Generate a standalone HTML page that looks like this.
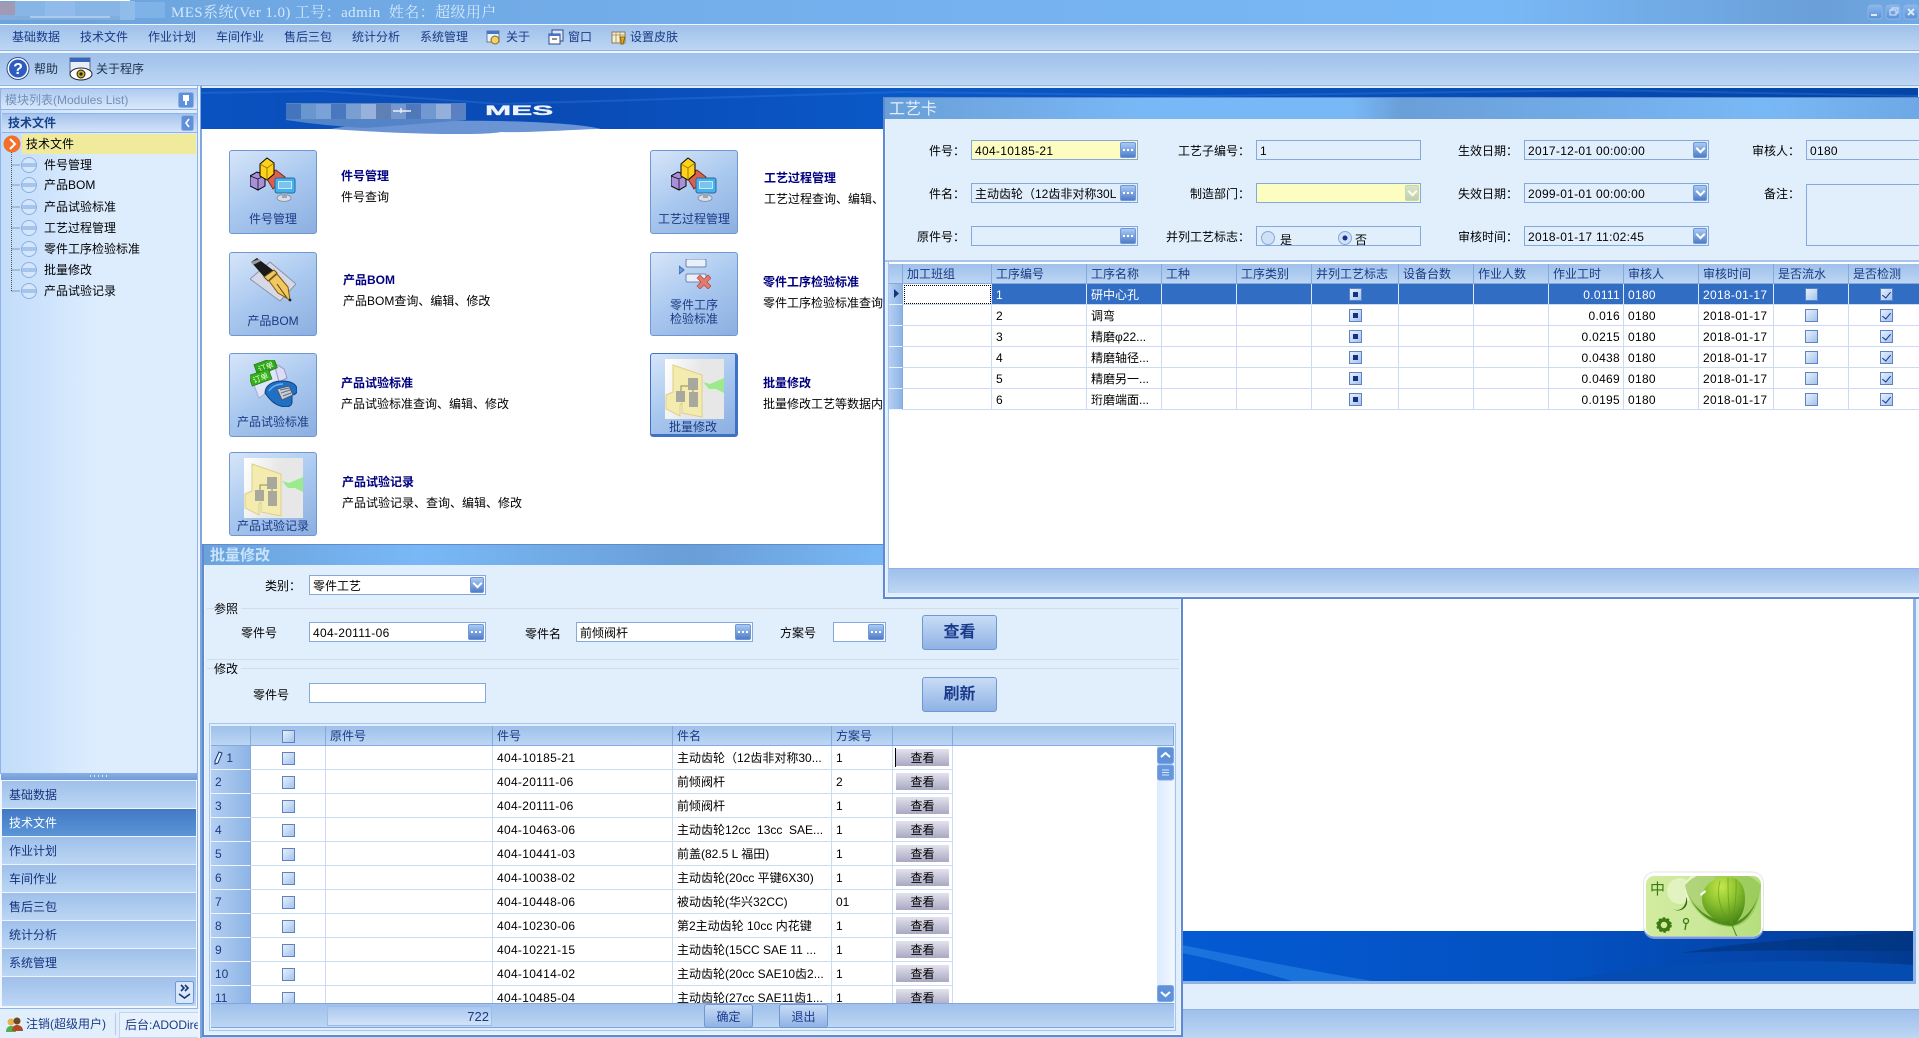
<!DOCTYPE html>
<html lang="zh"><head><meta charset="utf-8"><title>MES</title>
<style>
html,body{margin:0;padding:0;width:1919px;height:1038px;overflow:hidden;background:#e1effd}
body{position:relative;font:12px/16px "Liberation Sans","WenQuanYi Zen Hei","Noto Sans CJK SC",sans-serif;color:#000}
div,span,svg,table{box-sizing:border-box}
.a,.t{position:absolute}
.t{white-space:pre;height:18px;line-height:18px}
.n{color:#1a3a84}
.m{letter-spacing:.3px}
.bar{background:linear-gradient(#9fc0eb,#bcd6f3)}
.tb{position:absolute;height:21px;color:#c9e3fb;font-weight:bold;font-size:15px;line-height:23px;padding-left:6px}
.in{position:absolute;height:20px;border:1px solid #86a9dd;background:#fff;padding-left:3px;line-height:20px;white-space:pre;overflow:hidden}
.c{background:#e1effd}
.y{background:#fdfdc2}
.e,.d{position:absolute;top:1px;right:1px;height:16px;border:1px solid #6f96d6;border-radius:2px;background:linear-gradient(#a9cbf3,#4f7dc8)}
.e{width:16px}
.e:after{content:"";position:absolute;left:6px;top:6px;width:2px;height:2px;background:#fff;box-shadow:-4px 0 #fff,4px 0 #fff}
.d{width:14px}
.d:after{content:"";position:absolute;left:3px;top:2px;width:5px;height:5px;border:solid #fff;border-width:0 2px 2px 0;transform:rotate(45deg)}
.g{opacity:.65;background:linear-gradient(#c5d8cf,#9fb9ae);border-color:#a9c0b0}
.ib{position:absolute;width:88px;height:84px;border:1px solid #6f97d2;border-radius:3px;background:linear-gradient(150deg,#d6e5f9,#a9c8ef 50%,#8cafe1);color:#1a3a84;text-align:center}
.ib span{position:absolute;left:0;right:0}
.h{color:#000080;font-weight:bold}
table{position:absolute;border-collapse:separate;border-spacing:0;table-layout:fixed}
td{padding:1px 0 0 4px;border-right:1px solid #cbdbf5;border-bottom:1px solid #cbdbf5;white-space:pre;overflow:hidden;vertical-align:middle;background:#fff}
tr.hd td{background:linear-gradient(#9fc0eb,#bcd6f3);color:#1a3a84;border-right:1px solid #86a9dd;border-bottom:1px solid #86a9dd}
td.rh{background:linear-gradient(90deg,#b4cff2,#8db4e6);color:#1a3a84;border-right:1px solid #86a9dd;border-bottom:1px solid #eef5fe}
tr.s td{background:#326dc4;color:#fff;border-bottom-color:#cbdbf5;border-right-color:#dce8fa}
td.ct{padding:0;text-align:center}
td.r{text-align:right;padding:1px 3px 0 0}
.ck{display:inline-block;width:13px;height:13px;border:1px solid #5f82c4;background:linear-gradient(135deg,#e6f0fc,#a4c3ec);vertical-align:middle;position:relative}
.ck.i:after{content:"";position:absolute;left:3px;top:3px;width:5px;height:5px;background:#16308a}
.ck.v:after{content:"";position:absolute;left:3px;top:1px;width:4px;height:7px;border:solid #16308a;border-width:0 1.5px 1.5px 0;transform:rotate(40deg)}
.sb{display:block;margin:0 0 0 3px;width:53px;height:17px;background:linear-gradient(#e2e2ee,#a9a8c2);text-align:center;line-height:18px}
.bb{position:absolute;border:1px solid #6f97d2;border-radius:3px;background:linear-gradient(#c8dcf6,#8fb2e4);color:#1a3a8c;text-align:center}
.nv{position:absolute;left:2px;width:194px;height:27px;background:linear-gradient(#9fc0eb,#bcd6f3);color:#15337e;line-height:29px;padding-left:7px}
.ln{position:absolute;height:1px;background:#d5dce6}
</style></head><body>

<svg width="0" height="0" style="position:absolute"><defs>
<symbol id="ic1" viewBox="0 0 46 45">
<path d="M14 17l12-4 9 7-12 12z" fill="#d9604a" stroke="#7a2a20"/>
<path d="M0 19l7-4 8 3v11l-7 4-8-4z" fill="#a98fd8" stroke="#000"/><path d="M8 22v11M0 19l8 3 7-4" fill="none" stroke="#000" stroke-width=".7"/>
<path d="M10 7l7-6 7 5v11l-7 6-7-4z" fill="#ffd21a" stroke="#000"/><path d="M17 11v12M10 7l7 4 7-5" fill="none" stroke="#a87800"/>
<rect x="25" y="21" width="20" height="15" rx="2" fill="#47b1ee" stroke="#266a9c"/><rect x="28" y="24" width="14" height="8" fill="#bfeaff"/><path d="M29 26h12M29 28h12M29 30h12" stroke="#3b9ad6"/>
<ellipse cx="34" cy="41" rx="7" ry="3.5" fill="#d8dde6" stroke="#8a92a6"/><path d="M32 36h5v5h-5z" fill="#9aa6ba"/>
</symbol>
<symbol id="ic2" viewBox="0 0 46 44">
<path d="M0 21L20 4l26 22-16 17z" fill="#d6d8e6" stroke="#8c90a8"/>
<path d="M1 4L7 0l17 13-8 8z" fill="#1a1a1a"/><path d="M1 4l8-3 2 2-8 4z" fill="#999"/>
<path d="M14 19l10-7 3 3-9 8z" fill="#e8c868" stroke="#6e5010"/>
<path d="M19 23l8-7 11 13 2 13-12-7z" fill="#f2c860" stroke="#7a5a12"/><path d="M27 26l10 14" stroke="#5a4010"/><circle cx="40" cy="42" r="1.4" fill="#222"/>
</symbol>
<symbol id="ic3" viewBox="0 0 47 47">
<path d="M2 20l28-14 7 12-28 20z" fill="#dfe5f6" stroke="#a2aecc"/>
<path d="M24 3l10 6 3 9-8 4z" fill="#dcdcf6" stroke="#9898c8"/>
<g transform="rotate(-20 15 6)"><rect x="5" y="1" width="21" height="11" fill="#2fa81a" stroke="#1a6a10" stroke-width=".6"/><text x="15.500" y="10" text-anchor="middle" font-size="8" fill="#e8ffd0" font-family="WenQuanYi Zen Hei,Noto Sans CJK SC,sans-serif">订单</text></g>
<g transform="rotate(-20 10 18)"><rect x="0" y="12" width="21" height="11" fill="#35b01e" stroke="#1a6a10" stroke-width=".6"/><text x="10.500" y="21" text-anchor="middle" font-size="8" fill="#e8ffd0" font-family="WenQuanYi Zen Hei,Noto Sans CJK SC,sans-serif">订单</text></g>
<path d="M15 33c0-8 8-12 17-12s15 3 15 9c0 4-3 5-5 5v7c0 4-4 5-7 5-8-1-13-4-20-14z" fill="#1f6fc4" stroke="#0d3f80"/>
<path d="M19 31c3-5 9-7 14-7" stroke="#6ab4f0" stroke-width="1.500" fill="none"/>
<path d="M27 29l12-3 4 9-11 5z" fill="#c7ccd4" stroke="#4a5a74"/><path d="M30 30l9-2M31 33l9-3M33 36l8-3" stroke="#60708c"/>
</symbol>
<symbol id="ic4" viewBox="0 0 59 60">
<defs><linearGradient id="bg4" x1="0" y1="0" x2="1" y2=".3"><stop offset="0" stop-color="#ffffff"/><stop offset=".6" stop-color="#e7e7e7"/></linearGradient></defs>
<rect width="59" height="60" fill="url(#bg4)"/>
<path d="M8 6L37 16V58L17 54V44L15 46V57L1 50V36L8 33z" fill="#f3ecae" stroke="#dcd08a"/>
<path d="M23 19h10v12H23zM11 32h9v11h-9zM24 33h9v15h-9z" fill="#a8a89c"/><path d="M28 31v2M16 32v-5h7" stroke="#8c8c60" fill="none"/>
<path d="M38 23l7 2 14-6v15l-8-4-7 0z" fill="#9bea8c"/>
</symbol>
<symbol id="ic5" viewBox="0 0 32 30">
<path d="M0 7l5 4-5 4z" fill="#6a9ee0" stroke="#3a68ac"/>
<rect x="7" y="0" width="20" height="8" rx="1.5" fill="#e8f0fb" stroke="#6f86ac"/>
<rect x="7" y="15" width="20" height="8" rx="1.5" fill="#e8f0fb" stroke="#6f86ac"/>
<path d="M21 16l4 4 4-4 3 3-4 4 4 4-3 3-4-4-4 4-3-3 4-4-4-4z" fill="#e27b6e" stroke="#b04a42" stroke-width=".7"/>
</symbol>
</defs></svg>

<!-- title bar -->
<div class="a" style="left:0;top:0;width:1919px;height:24px;background:linear-gradient(90deg,#6ca3dc 0,#74afec 40%,#79b8f6 78%,#6a9fd8 95%,#70aae4 100%)"></div>
<div class="a" style="left:0;top:0;width:130px;height:1px;background:#fff"></div>
<div class="a" style="left:0;top:2px;width:15px;height:13px;background:#a09ab4"></div>
<div class="a" style="left:15px;top:1px;width:115px;height:15px;background:#87b5e6"></div>
<div class="a" style="left:0;top:15px;width:15px;height:5px;background:#85aede"></div>
<div class="a" style="left:15px;top:16px;width:115px;height:4px;background:#82aede"></div>
<div class="a" style="left:45px;top:1px;width:30px;height:15px;background:#90bbea"></div>
<div class="a" style="left:120px;top:1px;width:15px;height:19px;background:#90bcea"></div>
<div class="a" style="left:135px;top:2px;width:30px;height:16px;background:#7fb2e6"></div>
<div class="a" style="left:30px;top:16px;width:80px;height:2px;background:#c7def8;opacity:.6"></div>
<span class="t" style="left:171px;top:4px;height:18px;font:15px/18px 'Liberation Serif','Noto Serif CJK SC',serif;color:#d3e8fb;letter-spacing:.4px">MES系统(Ver 1.0) 工号：admin  姓名：超级用户</span>
<svg class="a" style="left:1867px;top:4px" width="52" height="16">
<defs><linearGradient id="wb" x1="0" x2="0" y1="0" y2="1"><stop offset="0" stop-color="#8db8ec"/><stop offset="1" stop-color="#5a8ed6"/></linearGradient></defs>
<g stroke="#8db4e8"><rect x="1" y="1" width="14" height="14" rx="3" fill="url(#wb)"/><rect x="19" y="1" width="14" height="14" rx="3" fill="url(#wb)"/><rect x="37" y="1" width="14" height="14" rx="3" fill="url(#wb)"/></g>
<path d="M4 11h6" stroke="#dbeafc" stroke-width="2"/><path d="M23 6h6v5h-6zM25 6V4h6v5h-2" stroke="#dbeafc" fill="none"/><path d="M41 5l6 6M47 5l-6 6" stroke="#dbeafc" stroke-width="2"/>
</svg>
<div class="a" style="left:0;top:24px;width:1919px;height:1px;background:#f2f8ff"></div>

<!-- menu -->
<div class="a bar" style="left:0;top:25px;width:1919px;height:25px"></div>
<div class="a" style="left:0;top:50px;width:1919px;height:1px;background:#8fb3e6"></div>
<div class="a" style="left:0;top:51px;width:1919px;height:2px;background:#eef5fe"></div>
<span class="t n" style="left:12px;top:28px">基础数据</span>
<span class="t n" style="left:80px;top:28px">技术文件</span>
<span class="t n" style="left:148px;top:28px">作业计划</span>
<span class="t n" style="left:216px;top:28px">车间作业</span>
<span class="t n" style="left:284px;top:28px">售后三包</span>
<span class="t n" style="left:352px;top:28px">统计分析</span>
<span class="t n" style="left:420px;top:28px">系统管理</span>
<svg class="a" style="left:486px;top:29px" width="16" height="16"><rect x="1" y="2" width="12" height="11" fill="#eef3fb" stroke="#6a7aa0"/><rect x="1" y="2" width="12" height="3" fill="#3f78c8"/><circle cx="9" cy="11" r="4" fill="#f0d070" stroke="#8a6a10"/></svg>
<span class="t n" style="left:506px;top:28px">关于</span>
<svg class="a" style="left:548px;top:29px" width="16" height="16"><rect x="4" y="1" width="11" height="11" fill="#dfe8f6" stroke="#2c4a90"/><rect x="1" y="5" width="11" height="10" fill="#fff" stroke="#2c4a90"/><rect x="1" y="5" width="11" height="2" fill="#3f78c8"/><path d="M4 10h5" stroke="#222"/></svg>
<span class="t n" style="left:568px;top:28px">窗口</span>
<svg class="a" style="left:611px;top:29px" width="16" height="16"><rect x="1" y="3" width="13" height="11" fill="#f6f0d8" stroke="#8a7a50"/><path d="M1 6h13M5 3v11M9 3v11" stroke="#b09a60"/><path d="M9 8h5l-1 3-1 4h-2v-4z" fill="#e8b020" stroke="#8a6010"/></svg>
<span class="t n" style="left:630px;top:28px">设置皮肤</span>

<!-- toolbar -->
<div class="a bar" style="left:0;top:53px;width:1919px;height:32px"></div>
<div class="a" style="left:0;top:85px;width:1919px;height:1px;background:#8fb3e6"></div>
<svg class="a" style="left:6px;top:56px" width="24" height="25"><circle cx="12" cy="12.5" r="11" fill="#fff" stroke="#33508c"/><circle cx="12" cy="12.5" r="9" fill="#2d5dc0"/><text x="12" y="18" text-anchor="middle" font-size="16" font-weight="bold" fill="#fff" font-family="Liberation Sans">?</text></svg>
<span class="t n" style="left:34px;top:60px;color:#22344f">帮助</span>
<svg class="a" style="left:69px;top:57px" width="24" height="24"><rect x="1" y="1" width="20" height="15" fill="#e8eef8" stroke="#5a6a90"/><rect x="1" y="1" width="20" height="4" fill="#3566b8"/><ellipse cx="12" cy="17" rx="11" ry="6" fill="#fff" stroke="#222"/><circle cx="12" cy="17" r="4" fill="#c8b020" stroke="#222"/><circle cx="12" cy="17" r="1.6" fill="#222"/></svg>
<span class="t n" style="left:96px;top:60px;color:#22344f">关于程序</span>

<!-- sidebar -->
<div class="a" style="left:0;top:86px;width:198px;height:923px;background:#f2f8ff"></div>
<div class="a" style="left:0;top:88px;width:198px;height:686px;background:linear-gradient(90deg,#c2dcfa,#ddedfe 50%);border:1px solid #8fb3e6"></div>
<div class="a" style="left:1px;top:89px;width:196px;height:21px;background:linear-gradient(#b0cbef,#d9e8fa);border-bottom:1px solid #8fb3e6"></div>
<span class="t" style="left:5px;top:91px;color:#7090bb">模块列表(Modules List)</span>
<svg class="a" style="left:178px;top:92px" width="16" height="16"><rect x=".5" y=".5" width="15" height="15" rx="2" fill="#5f90da" stroke="#8fb3e6"/><path d="M5 3h6v6H9v4H7V9H5z" fill="#fff"/></svg>
<div class="a" style="left:2px;top:113px;width:195px;height:20px;background:linear-gradient(#a6c4ec,#d3e3f8);border-top:1px solid #8fb3e6;border-bottom:1px solid #8fb3e6"></div>
<span class="t" style="left:8px;top:114px;color:#15428b;font-weight:bold">技术文件</span>
<svg class="a" style="left:181px;top:115px" width="13" height="16"><rect x=".5" y=".5" width="12" height="15" rx="2" fill="#5f90da" stroke="#8fb3e6"/><path d="M8 4L5 8l3 4" stroke="#fff" stroke-width="1.6" fill="none"/></svg>
<div class="a" style="left:22px;top:134px;width:174px;height:20px;background:#f0eb9c"></div>
<span class="t" style="left:26px;top:135px">技术文件</span>
<svg class="a" style="left:3px;top:135px" width="18" height="18"><circle cx="9" cy="9" r="8.5" fill="#f4702a"/><path d="M7 4l5 5-5 5" stroke="#fff" stroke-width="2" fill="none"/></svg>
<svg class="a" style="left:8px;top:152px" width="30" height="150">
<path d="M3.5 0V139M3.5 13H12M3.5 33H12M3.5 55H12M3.5 76H12M3.5 97H12M3.5 118H12M3.5 139H12" stroke="#555" stroke-dasharray="1 1" fill="none"/>
<g fill="#d5e6fb" stroke="#8ab0e4"><circle cx="21" cy="13" r="7.5"/><circle cx="21" cy="33" r="7.5"/><circle cx="21" cy="55" r="7.5"/><circle cx="21" cy="76" r="7.5"/><circle cx="21" cy="97" r="7.5"/><circle cx="21" cy="118" r="7.5"/><circle cx="21" cy="139" r="7.5"/></g>
<g fill="#a5c4ee"><rect x="14" y="11" width="14" height="4"/><rect x="14" y="31" width="14" height="4"/><rect x="14" y="53" width="14" height="4"/><rect x="14" y="74" width="14" height="4"/><rect x="14" y="95" width="14" height="4"/><rect x="14" y="116" width="14" height="4"/><rect x="14" y="137" width="14" height="4"/></g>
</svg>
<span class="t" style="left:44px;top:156px">件号管理</span>
<span class="t" style="left:44px;top:176px">产品BOM</span>
<span class="t" style="left:44px;top:198px">产品试验标准</span>
<span class="t" style="left:44px;top:219px">工艺过程管理</span>
<span class="t" style="left:44px;top:240px">零件工序检验标准</span>
<span class="t" style="left:44px;top:261px">批量修改</span>
<span class="t" style="left:44px;top:282px">产品试验记录</span>

<div class="a" style="left:1px;top:773px;width:196px;height:7px;background:linear-gradient(#8ab0e4,#6f9ad8)"></div>
<div class="a" style="left:90px;top:775px;width:18px;height:2px;background:repeating-linear-gradient(90deg,#dbe8fa 0 1px,transparent 1px 4px)"></div>
<div class="a" style="left:1px;top:780px;width:197px;height:227px;background:#eef5fe;border-right:1px solid #8fb3e6"></div>
<div class="nv" style="top:781px">基础数据</div>
<div class="nv" style="top:809px;background:linear-gradient(#4278c4,#5a96d8);color:#fff">技术文件</div>
<div class="nv" style="top:837px">作业计划</div>
<div class="nv" style="top:865px">车间作业</div>
<div class="nv" style="top:893px">售后三包</div>
<div class="nv" style="top:921px">统计分析</div>
<div class="nv" style="top:949px">系统管理</div>
<div class="a bar" style="left:2px;top:977px;width:194px;height:29px"></div>
<svg class="a" style="left:175px;top:981px" width="19" height="23"><rect x=".5" y=".5" width="18" height="22" rx="2" fill="#d9e7fa" stroke="#6f97d2"/><path d="M6 4l3 3-3 3M10 4l3 3-3 3M4 13l5.500 4 5.500-4" stroke="#15337e" stroke-width="1.600" fill="none"/></svg>

<!-- status left -->
<div class="a" style="left:0;top:1009px;width:203px;height:29px;background:#e1effd"></div>
<div class="a" style="left:0;top:1008px;width:198px;height:1px;background:#8fb3e6"></div>
<svg class="a" style="left:6px;top:1016px" width="17" height="17"><circle cx="5" cy="6" r="3.500" fill="#e8b050"/><path d="M0 16c0-5 3-6 5-6s5 1 5 6z" fill="#52b052"/><circle cx="11" cy="5" r="3.500" fill="#6a4a20"/><path d="M6 15c0-5 3-6 5-6s6 1 6 6z" fill="#b04a20"/></svg>
<span class="t n" style="left:26px;top:1015px">注销(超级用户)</span>
<div class="a" style="left:115px;top:1013px;width:1px;height:22px;background:#b9c9e0"></div>
<div class="a" style="left:119px;top:1012px;width:84px;height:26px;background:#e8f2fe;border:1px solid #c2d4ee"></div>
<span class="t n" style="left:125px;top:1016px">后台:ADODire</span>

<!-- separators -->
<div class="a" style="left:197px;top:86px;width:1px;height:923px;background:#8fb3e6"></div>
<div class="a" style="left:198px;top:86px;width:2px;height:952px;background:#eef5fe"></div>
<div class="a" style="left:200px;top:86px;width:2px;height:952px;background:#7fa6e0"></div>

<!-- main content -->
<div class="a" style="left:202px;top:129px;width:682px;height:420px;background:#fff"></div>
<svg class="a" style="left:201px;top:88px" width="1718" height="46" viewBox="0 0 1718 46">
<defs><linearGradient id="tb" x1="0" x2="1" y1="0" y2="0"><stop offset="0" stop-color="#0a52c0"/><stop offset=".2" stop-color="#0a4ab4"/><stop offset=".4" stop-color="#0a58c8"/><stop offset="1" stop-color="#0344a8"/></linearGradient></defs>
<rect width="1717" height="41" fill="url(#tb)"/>
<path d="M0 5L120 3 300 16 700 4 1000 8 1400 2 1717 8" stroke="#3a86e0" stroke-opacity=".3" stroke-width="2" fill="none"/>
<path d="M130 41C200 46 280 48 300 44 330 45 380 41 400 41 360 30 180 30 130 41z" fill="#6a94d4"/>
<path d="M85 15h180v17q-60 5-100 8-40-2-80-8z" fill="#5484c8"/>
<g><rect x="85" y="16" width="15" height="15" fill="#4374bc"/><rect x="100" y="16" width="15" height="15" fill="#6a96d0"/><rect x="115" y="16" width="15" height="15" fill="#7ba2d6"/><rect x="130" y="16" width="15" height="15" fill="#4a78be"/><rect x="145" y="16" width="15" height="15" fill="#7a9ed2"/><rect x="160" y="16" width="15" height="15" fill="#96b2da"/><rect x="175" y="16" width="15" height="15" fill="#6080b4"/><rect x="190" y="16" width="15" height="15" fill="#7498ce"/><rect x="205" y="16" width="15" height="15" fill="#4f78b8"/><rect x="220" y="16" width="15" height="15" fill="#7298d2"/><rect x="235" y="16" width="15" height="15" fill="#94b0da"/><rect x="250" y="16" width="14" height="15" fill="#5a80c2"/></g>
<path d="M192 23h18M200 20v5" stroke="#e8eef8" stroke-width="1.500"/>
<text x="0" y="0" transform="translate(284 27) scale(2.250 1)" font-family="Liberation Sans" font-weight="bold" font-size="14" fill="#eef2fb" stroke="#eef2fb" stroke-width=".3">MES</text>
</svg>

<div class="ib" style="left:229px;top:150px"><svg class="a" style="left:20px;top:6px" width="46" height="45"><use href="#ic1"/></svg><span style="top:60px">件号管理</span></div>
<div class="ib" style="left:229px;top:252px"><svg class="a" style="left:20px;top:5px" width="46" height="44"><use href="#ic2"/></svg><span style="top:60px">产品BOM</span></div>
<div class="ib" style="left:229px;top:353px"><svg class="a" style="left:20px;top:6px" width="47" height="47"><use href="#ic3"/></svg><span style="top:60px">产品试验标准</span></div>
<div class="ib" style="left:229px;top:452px"><svg class="a" style="left:14px;top:5px" width="59" height="60"><use href="#ic4"/></svg><span style="top:65px">产品试验记录</span></div>
<div class="ib" style="left:650px;top:150px"><svg class="a" style="left:20px;top:6px" width="46" height="45"><use href="#ic1"/></svg><span style="top:60px">工艺过程管理</span></div>
<div class="ib" style="left:650px;top:252px"><svg class="a" style="left:28px;top:6px" width="32" height="30"><use href="#ic5"/></svg><span style="top:45px;line-height:14px">零件工序<br>检验标准</span></div>
<div class="ib" style="left:650px;top:353px;border:2px solid #3f72c6;border-width:1px 3px 3px 1px"><svg class="a" style="left:14px;top:5px" width="59" height="60"><use href="#ic4"/></svg><span style="top:65px">批量修改</span></div>

<span class="t h" style="left:341px;top:167px">件号管理</span><span class="t" style="left:341px;top:188px">件号查询</span>
<span class="t h" style="left:343px;top:271px">产品BOM</span><span class="t" style="left:343px;top:292px">产品BOM查询、编辑、修改</span>
<span class="t h" style="left:341px;top:374px">产品试验标准</span><span class="t" style="left:341px;top:395px">产品试验标准查询、编辑、修改</span>
<span class="t h" style="left:342px;top:473px">产品试验记录</span><span class="t" style="left:342px;top:494px">产品试验记录、查询、编辑、修改</span>
<span class="t h" style="left:764px;top:169px">工艺过程管理</span><span class="t" style="left:764px;top:190px">工艺过程查询、编辑、</span>
<span class="t h" style="left:763px;top:273px">零件工序检验标准</span><span class="t" style="left:763px;top:294px">零件工序检验标准查询</span>
<span class="t h" style="left:763px;top:374px">批量修改</span><span class="t" style="left:763px;top:395px">批量修改工艺等数据内</span>

<!-- right blank window -->
<div class="a" style="left:1182px;top:590px;width:734px;height:394px;background:#fff;border-right:3px solid #8fb3e6;border-bottom:3px solid #8fb3e6"></div>
<svg class="a" style="left:1182px;top:931px" width="731" height="50">
<defs><linearGradient id="bb" x1="0" x2="1" y1="0" y2="0"><stop offset="0" stop-color="#045ad2"/><stop offset=".55" stop-color="#0350c0"/><stop offset=".8" stop-color="#0444a8"/><stop offset="1" stop-color="#023a90"/></linearGradient></defs>
<rect width="731" height="50" fill="url(#bb)"/>
<path d="M0 14C60 26 130 40 190 50H110C70 38 30 28 0 22z" fill="#2a86e4" opacity=".6"/>
<path d="M380 50C480 30 620 26 731 34V50z" fill="#044cb0"/>
<path d="M500 22C560 10 650 6 731 0V20C650 20 570 18 500 22z" fill="#02357f" opacity=".7"/>
</svg>
<div class="a" style="left:1182px;top:985px;width:737px;height:24px;background:#e1effd"></div>
<div class="a" style="left:203px;top:1009px;width:1716px;height:1px;background:#8fb3e6"></div>
<div class="a bar" style="left:203px;top:1010px;width:1716px;height:28px"></div>

<!-- widget -->
<svg class="a" style="left:1642px;top:871px" width="124" height="70">
<defs>
<linearGradient id="w1" x1="0" x2="1" y1="0" y2="0"><stop offset="0" stop-color="#d2ec9e"/><stop offset=".5" stop-color="#cbe89a"/><stop offset="1" stop-color="#b4de7c"/></linearGradient>
<radialGradient id="w2" cx=".45" cy=".2" r=".85"><stop offset="0" stop-color="#c6e84a"/><stop offset=".5" stop-color="#84bc2c"/><stop offset="1" stop-color="#3f7d14"/></radialGradient>
<clipPath id="wc"><rect x="4" y="5" width="115" height="60" rx="8"/></clipPath>
</defs>
<rect x="1.500" y="2" width="120" height="66" rx="11" fill="#7c9bd4"/><rect x="1.500" y="1" width="120" height="64" rx="11" fill="#fff" stroke="#e6e6e6"/>
<g clip-path="url(#wc)"><rect x="4" y="5" width="115" height="60" fill="url(#w1)"/>
<circle cx="60" cy="18" r="17" fill="#eef7d6" opacity=".85"/><circle cx="38" cy="20" r="13" fill="#eef8d8" opacity=".6"/>
<path d="M90 56C70 56 48 42 43 14 60-6 100-6 119 14 116 40 106 54 90 56z" fill="#8fc24c" opacity=".65"/>
<path d="M90 55C66 54 52 38 46 22 54 42 72 50 90 52 100 50 112 40 117 22 112 40 104 52 90 55z" fill="#4f8f1c"/>
<path d="M90 54C72 52 60 40 60 28 60 12 75 6 85 6 97 6 103 14 103 28 103 40 98 50 90 54z" fill="url(#w2)"/>
<path d="M90 54C78 42 74 24 78 10M90 54C92 42 95 24 94 8M90 54C86 40 86 20 86 7" stroke="#5a9a1e" fill="none" opacity=".6"/>
<path d="M90 54L95 66" stroke="#4f8a1e"/>
<path d="M58 23l5-4 1 2-5 4z" fill="#fff"/></g>
<text x="8" y="23" font-size="15" fill="#3c7a10" font-family="WenQuanYi Zen Hei,Noto Sans CJK SC,sans-serif">中</text>
<path d="M30 37A9 9 0 0 0 44 26 9 11 0 0 1 30 37z" fill="#2f6a0a"/>
<circle cx="22" cy="54" r="5" fill="none" stroke="#3c7a10" stroke-width="3.500"/><circle cx="22" cy="54" r="7" fill="none" stroke="#3c7a10" stroke-width="1.500" stroke-dasharray="2.500 2"/>
<circle cx="44" cy="50" r="2.500" fill="none" stroke="#3c7a10" stroke-width="1.300"/><path d="M44 53l-1 6" stroke="#3c7a10" stroke-width="1.300"/>
</svg>

<!-- batch window -->
<div class="a" style="left:202px;top:544px;width:981px;height:493px;background:#e1effd;border:1px solid #5f8ad0;border-width:1px 2px 2px 2px;box-shadow:inset 0 0 0 1px #eef5fe"></div>
<div class="tb" style="left:204px;top:545px;width:977px;height:20px;line-height:22px;background:linear-gradient(90deg,#6ba2dc 0,#79b8f6 22%,#699ed6 50%,#79b8f6 70%,#6ba2dc 100%)">批量修改</div>
<span class="t" style="left:265px;top:577px">类别：</span>
<div class="in" style="left:309px;top:575px;width:177px">零件工艺<span class="d"></span></div>
<div class="ln" style="left:207px;top:608px;width:972px"></div>
<span class="t c" style="left:214px;top:600px;padding-right:3px;height:16px;line-height:18px">参照</span>
<span class="t" style="left:241px;top:624px">零件号</span>
<div class="in m" style="left:309px;top:622px;width:177px">404-20111-06<span class="e"></span></div>
<span class="t" style="left:525px;top:625px">零件名</span>
<div class="in" style="left:576px;top:622px;width:177px">前倾阀杆<span class="e"></span></div>
<span class="t" style="left:780px;top:624px">方案号</span>
<div class="in" style="left:833px;top:622px;width:53px"><span class="e"></span></div>
<div class="bb" style="left:922px;top:615px;width:75px;height:35px;font:bold 16px/33px 'Liberation Sans','WenQuanYi Zen Hei','Noto Sans CJK SC',sans-serif">查看</div>
<div class="ln" style="left:207px;top:659px;width:972px"></div>
<div class="ln" style="left:207px;top:668px;width:972px"></div>
<span class="t c" style="left:214px;top:660px;padding-right:3px;height:16px;line-height:18px">修改</span>
<span class="t" style="left:253px;top:686px">零件号</span>
<div class="in" style="left:309px;top:683px;width:177px"></div>
<div class="bb" style="left:922px;top:677px;width:75px;height:35px;font:bold 16px/33px 'Liberation Sans','WenQuanYi Zen Hei','Noto Sans CJK SC',sans-serif">刷新</div>

<div class="a" style="left:209px;top:723px;width:967px;height:308px;border:1px solid #a9c4ea;background:#e1effd"></div>
<div class="a" style="left:211px;top:726px;width:963px;height:277px;background:#fff;overflow:hidden">
<table style="left:0;top:0;width:963px">
<colgroup><col style="width:40px"><col style="width:75px"><col style="width:167px"><col style="width:180px"><col style="width:159px"><col style="width:61px"><col style="width:60px"><col></colgroup>
<tr class="hd" style="height:20px"><td></td><td class="ct"><span class="ck"></span></td><td>原件号</td><td>件号</td><td>件名</td><td>方案号</td><td></td><td></td></tr>
<tr style="height:24px"><td class="rh" style="padding-left:2px"><svg width="10" height="14" style="vertical-align:-3px"><path d="M6 1l3 1-4 10-3 1 0-3z" fill="#e6f0fc" stroke="#15337e"/></svg> 1</td><td class="ct"><span class="ck"></span></td><td></td><td class="m">404-10185-21</td><td>主动齿轮（12齿非对称30...</td><td>1</td><td style="padding:0"><span class="sb">查看</span></td><td style="border:0"></td></tr>
<tr style="height:24px"><td class="rh">2</td><td class="ct"><span class="ck"></span></td><td></td><td class="m">404-20111-06</td><td>前倾阀杆</td><td>2</td><td style="padding:0"><span class="sb">查看</span></td><td style="border:0"></td></tr>
<tr style="height:24px"><td class="rh">3</td><td class="ct"><span class="ck"></span></td><td></td><td class="m">404-20111-06</td><td>前倾阀杆</td><td>1</td><td style="padding:0"><span class="sb">查看</span></td><td style="border:0"></td></tr>
<tr style="height:24px"><td class="rh">4</td><td class="ct"><span class="ck"></span></td><td></td><td class="m">404-10463-06</td><td>主动齿轮12cc  13cc  SAE...</td><td>1</td><td style="padding:0"><span class="sb">查看</span></td><td style="border:0"></td></tr>
<tr style="height:24px"><td class="rh">5</td><td class="ct"><span class="ck"></span></td><td></td><td class="m">404-10441-03</td><td>前盖(82.5 L 福田)</td><td>1</td><td style="padding:0"><span class="sb">查看</span></td><td style="border:0"></td></tr>
<tr style="height:24px"><td class="rh">6</td><td class="ct"><span class="ck"></span></td><td></td><td class="m">404-10038-02</td><td>主动齿轮(20cc 平键6X30)</td><td>1</td><td style="padding:0"><span class="sb">查看</span></td><td style="border:0"></td></tr>
<tr style="height:24px"><td class="rh">7</td><td class="ct"><span class="ck"></span></td><td></td><td class="m">404-10448-06</td><td>被动齿轮(华兴32CC)</td><td>01</td><td style="padding:0"><span class="sb">查看</span></td><td style="border:0"></td></tr>
<tr style="height:24px"><td class="rh">8</td><td class="ct"><span class="ck"></span></td><td></td><td class="m">404-10230-06</td><td>第2主动齿轮 10cc 内花键</td><td>1</td><td style="padding:0"><span class="sb">查看</span></td><td style="border:0"></td></tr>
<tr style="height:24px"><td class="rh">9</td><td class="ct"><span class="ck"></span></td><td></td><td class="m">404-10221-15</td><td>主动齿轮(15CC SAE 11 ...</td><td>1</td><td style="padding:0"><span class="sb">查看</span></td><td style="border:0"></td></tr>
<tr style="height:24px"><td class="rh">10</td><td class="ct"><span class="ck"></span></td><td></td><td class="m">404-10414-02</td><td>主动齿轮(20cc SAE10齿2...</td><td>1</td><td style="padding:0"><span class="sb">查看</span></td><td style="border:0"></td></tr>
<tr style="height:24px"><td class="rh">11</td><td class="ct"><span class="ck"></span></td><td></td><td class="m">404-10485-04</td><td>主动齿轮(27cc SAE11齿1...</td><td>1</td><td style="padding:0"><span class="sb">查看</span></td><td style="border:0"></td></tr>
</table>
</div>
<div class="a" style="left:895px;top:748px;width:1px;height:19px;background:#000"></div>
<div class="a" style="left:1157px;top:746px;width:17px;height:257px;background:linear-gradient(90deg,#dcebfd,#f2f8ff)"></div>
<svg class="a" style="left:1157px;top:747px" width="17" height="34"><rect x=".5" y=".5" width="16" height="16" rx="2" fill="#5f92da" stroke="#7fa6e0"/><path d="M4 10l4.500-4 4.500 4" stroke="#fff" stroke-width="2" fill="none"/><rect x=".5" y="18" width="16" height="15" rx="2" fill="#6696dc" stroke="#7fa6e0"/><path d="M5 23h7M5 25.500h7M5 28h7" stroke="#d7e6fb"/></svg>
<svg class="a" style="left:1157px;top:985px" width="17" height="17"><rect x=".5" y=".5" width="16" height="16" rx="2" fill="#5f92da" stroke="#7fa6e0"/><path d="M4 7l4.500 4 4.500-4" stroke="#fff" stroke-width="2" fill="none"/></svg>
<div class="a bar" style="left:211px;top:1003px;width:963px;height:25px;border-top:1px solid #7fa6e0;border-bottom:1px solid #7fa6e0"></div>
<div class="a" style="left:327px;top:1006px;width:165px;height:20px;background:linear-gradient(#aac8ef,#d2e3f8);border:1px solid #9cbce9;text-align:right;padding-right:2px;line-height:19px;color:#1a3a84;font-size:13px">722</div>
<div class="bb" style="left:704px;top:1004px;width:49px;height:24px;line-height:24px">确定</div>
<div class="bb" style="left:779px;top:1004px;width:49px;height:24px;line-height:24px">退出</div>

<!-- tool card window -->
<div class="a" style="left:883px;top:97px;width:1040px;height:502px;background:#e1effd;border:1px solid #5f8ad0;border-width:1px 0 2px 2px;box-shadow:inset 0 0 0 1px #eef5fe"></div>
<div class="tb" style="left:885px;top:98px;width:1034px;background:linear-gradient(90deg,#6a9fd8 0,#79b8f6 25%,#79b8f6 45%,#6a9fd8 50%,#79b8f6 85%,#6ea8e6 100%);font-weight:normal;font-size:16px;color:#e1effc;padding-left:4px">工艺卡</div>

<span class="t" style="left:929px;top:142px">件号：</span>
<div class="in y m" style="left:971px;top:140px;width:167px">404-10185-21<span class="e"></span></div>
<span class="t" style="left:929px;top:185px">件名：</span>
<div class="in c" style="left:971px;top:183px;width:167px">主动齿轮（12齿非对称30L<span class="e"></span></div>
<span class="t" style="left:917px;top:228px">原件号：</span>
<div class="in c" style="left:971px;top:226px;width:167px"><span class="e"></span></div>
<span class="t" style="left:1178px;top:142px">工艺子编号：</span>
<div class="in c" style="left:1256px;top:140px;width:165px">1</div>
<span class="t" style="left:1190px;top:185px">制造部门：</span>
<div class="in y" style="left:1256px;top:183px;width:165px"><span class="d g"></span></div>
<span class="t" style="left:1166px;top:228px">并列工艺标志：</span>
<div class="in c" style="left:1256px;top:226px;width:165px"></div>
<svg class="a" style="left:1260px;top:230px" width="95" height="16"><circle cx="8" cy="8" r="6.500" fill="#cfe0f7" stroke="#8aa8d8"/><circle cx="85" cy="8" r="6.500" fill="#cfe0f7" stroke="#8aa8d8"/><circle cx="85" cy="8" r="2.500" fill="#16308a"/></svg>
<span class="t" style="left:1280px;top:231px">是</span><span class="t" style="left:1355px;top:231px">否</span>

<span class="t" style="left:1458px;top:142px">生效日期：</span>
<div class="in c m" style="left:1524px;top:140px;width:185px">2017-12-01 00:00:00<span class="d"></span></div>
<span class="t" style="left:1458px;top:185px">失效日期：</span>
<div class="in c m" style="left:1524px;top:183px;width:185px">2099-01-01 00:00:00<span class="d"></span></div>
<span class="t" style="left:1458px;top:228px">审核时间：</span>
<div class="in c m" style="left:1524px;top:226px;width:185px">2018-01-17 11:02:45<span class="d"></span></div>
<span class="t" style="left:1752px;top:142px">审核人：</span>
<div class="in c m" style="left:1806px;top:140px;width:120px">0180</div>
<span class="t" style="left:1764px;top:185px">备注：</span>
<div class="in c" style="left:1806px;top:184px;width:120px;height:62px"></div>

<div class="a" style="left:885px;top:260px;width:1034px;height:2px;background:#a9c4ea"></div>
<div class="a" style="left:888px;top:262px;width:1031px;height:306px;background:#fff;border-left:1px solid #a9c4ea"></div>
<div class="a" style="left:889px;top:264px;width:1030px;height:304px;overflow:hidden">
<table style="left:0;top:0;width:1035px">
<colgroup><col style="width:14px"><col style="width:89px"><col style="width:95px"><col style="width:75px"><col style="width:75px"><col style="width:75px"><col style="width:87px"><col style="width:75px"><col style="width:75px"><col style="width:75px"><col style="width:75px"><col style="width:75px"><col style="width:75px"><col style="width:75px"></colgroup>
<tr class="hd" style="height:20px"><td></td><td>加工班组</td><td>工序编号</td><td>工序名称</td><td>工种</td><td>工序类别</td><td>并列工艺标志</td><td>设备台数</td><td>作业人数</td><td>作业工时</td><td>审核人</td><td>审核时间</td><td>是否流水</td><td>是否检测</td></tr>
<tr class="s" style="height:21px"><td class="rh" style="background:linear-gradient(90deg,#b4cff2,#8db4e6);padding:0 0 0 5px;border-color:#86a9dd #86a9dd #eef5fe"><svg width="6" height="9"><path d="M0 0l5 4.500-5 4.500z" fill="#15337e"/></svg></td><td style="background:#fff;outline:1px dotted #000;outline-offset:-2px"></td><td>1</td><td>研中心孔</td><td></td><td></td><td class="ct"><span class="ck i"></span></td><td></td><td></td><td class="r m">0.0111</td><td class="m">0180</td><td class="m">2018-01-17</td><td class="ct"><span class="ck"></span></td><td class="ct"><span class="ck v"></span></td></tr>
<tr style="height:21px"><td class="rh"></td><td></td><td>2</td><td>调弯</td><td></td><td></td><td class="ct"><span class="ck i"></span></td><td></td><td></td><td class="r m">0.016</td><td class="m">0180</td><td class="m">2018-01-17</td><td class="ct"><span class="ck"></span></td><td class="ct"><span class="ck v"></span></td></tr>
<tr style="height:21px"><td class="rh"></td><td></td><td>3</td><td>精磨φ22...</td><td></td><td></td><td class="ct"><span class="ck i"></span></td><td></td><td></td><td class="r m">0.0215</td><td class="m">0180</td><td class="m">2018-01-17</td><td class="ct"><span class="ck"></span></td><td class="ct"><span class="ck v"></span></td></tr>
<tr style="height:21px"><td class="rh"></td><td></td><td>4</td><td>精磨轴径...</td><td></td><td></td><td class="ct"><span class="ck i"></span></td><td></td><td></td><td class="r m">0.0438</td><td class="m">0180</td><td class="m">2018-01-17</td><td class="ct"><span class="ck"></span></td><td class="ct"><span class="ck v"></span></td></tr>
<tr style="height:21px"><td class="rh"></td><td></td><td>5</td><td>精磨另一...</td><td></td><td></td><td class="ct"><span class="ck i"></span></td><td></td><td></td><td class="r m">0.0469</td><td class="m">0180</td><td class="m">2018-01-17</td><td class="ct"><span class="ck"></span></td><td class="ct"><span class="ck v"></span></td></tr>
<tr style="height:21px"><td class="rh"></td><td></td><td>6</td><td>珩磨端面...</td><td></td><td></td><td class="ct"><span class="ck i"></span></td><td></td><td></td><td class="r m">0.0195</td><td class="m">0180</td><td class="m">2018-01-17</td><td class="ct"><span class="ck"></span></td><td class="ct"><span class="ck v"></span></td></tr>
</table>
</div>
<div class="a bar" style="left:888px;top:568px;width:1031px;height:25px;border-top:1px solid #8fb3e6;border-bottom:1px solid #bcd6f3;border-left:1px solid #a9c4ea"></div>
</body></html>
